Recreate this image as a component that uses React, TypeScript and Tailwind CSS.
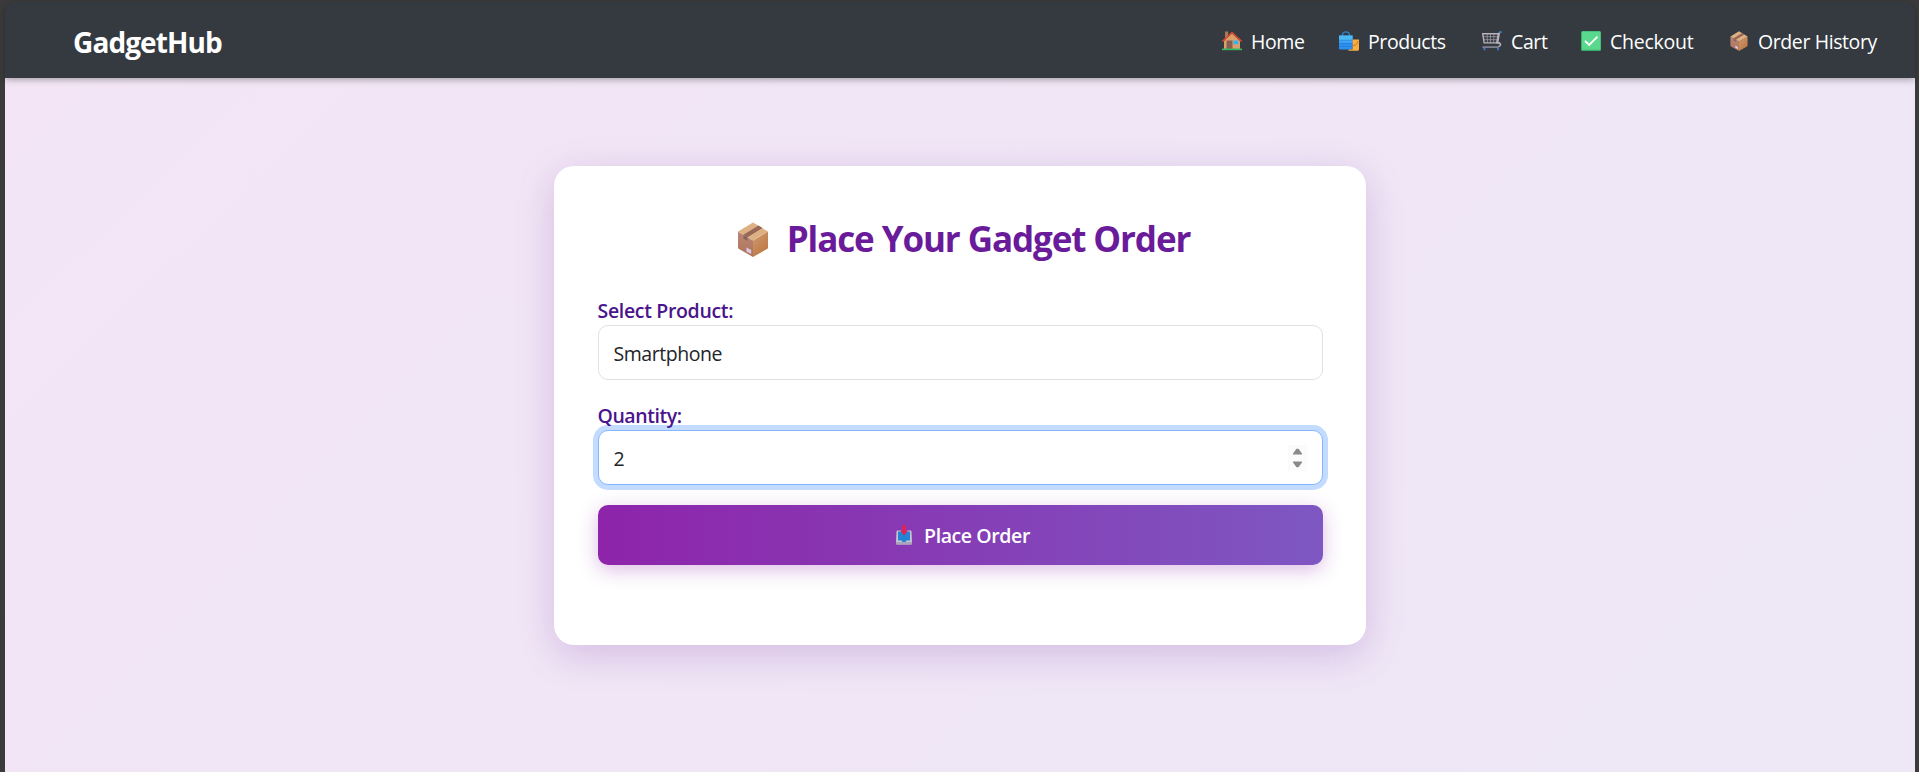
import React from "react";

function BoxIcon({ className }: { className: string }) {
  return (
    <svg viewBox="0 0 30 35" className={className}>
      <defs>
        <linearGradient id="boxLeft" x1="0" y1="0" x2="0" y2="1">
          <stop offset="0" stopColor="#b98672" />
          <stop offset="1" stopColor="#b0745c" />
        </linearGradient>
        <linearGradient id="boxRight" x1="0" y1="0" x2="0.6" y2="1">
          <stop offset="0" stopColor="#d09a72" />
          <stop offset="1" stopColor="#bd7842" />
        </linearGradient>
      </defs>
      <path d="M0 9.500 15 18.500V35L1 27Q0 26.500 0 25.500Z" fill="url(#boxLeft)" />
      <path d="M30 9.500 15 18.500V35L29 27Q30 26.500 30 25.500Z" fill="url(#boxRight)" />
      <path d="M0 9.500 15 .5 30 9.500 15 18.500Z" fill="#deb184" />
      <path d="M5.500 12.800 20.500 3.500 24.500 6 9.500 15.200Z" fill="#976855" />
      <path d="M5.500 12.800 9.500 15.200V19L5.500 16.500Z" fill="#856360" />
      <path d="M8.500 25.500 13.200 28V32L8.500 29.500Z" fill="#d9cbe6" />
    </svg>
  );
}

function HomeIcon() {
  return (
    <svg viewBox="0 0 20 20" className="h-5 w-5">
      <path d="M3 .5h3.200v8H3z" fill="#a57a55" />
      <path d="M2 10 10 2.500 18 10v8H2z" fill="#d8a16c" />
      <path d="M4.500 9.500h6V18h-6z" fill="#8a5f50" />
      <path d="M11.500 9.500h4.700v3.800h-4.700z" fill="#35b3f0" />
      <path d="M.8 10 10 1.500 19.200 10" fill="none" stroke="#e5452f" strokeWidth="1.600" strokeLinecap="round" strokeLinejoin="round" />
      <path d="M0 17.500h20v1.700H0z" fill="#38b561" />
    </svg>
  );
}

function BagsIcon() {
  return (
    <svg viewBox="0 0 20 20" className="h-5 w-5">
      <path d="M3.500 5V3.500Q4 .8 7 .8t3.500 2.700V5" fill="none" stroke="#2e86cd" strokeWidth="1.200" />
      <path d="M0 4.500h13.600V18.500H1.200Q0 18.500 0 17.300Z" fill="#2b8ff0" />
      <path d="M0 4.500h13.600v4.500H0z" fill="#4db9f3" />
      <path d="M0 9h13.600v3H0z" fill="#3fa5f2" />
      <path d="M0 9.200h13.600M0 12.400h13.600M0 15.500h13.600" stroke="#2573ce" strokeWidth=".5" />
      <path d="M13.600 8.500H20v9.700q0 1.500-1.500 1.500H9.500v-1.200h4.100z" fill="#f9ae3f" />
      <path d="M14.200 14.500c3 .2 4.300-1.800 4.300-4.300" fill="none" stroke="#d96b22" strokeWidth="1" />
    </svg>
  );
}

function CartIcon() {
  return (
    <svg viewBox="0 0 20 20" className="h-5 w-5" fill="none" stroke="#b9b2be">
      <path d="M.7 5.700h15.200M1.200 8.700h14.200M5 2.800l.5 9M8.500 2.800v9M12 2.800l-.3 9" strokeWidth=".8" stroke="#9b95a1" />
      <path d="M.7 2.800h15.600l-1.600 9.100H2.200z" strokeWidth="1.400" />
      <path d="M17.500 1.200 15.500 12c3.300-.7 4.300 2.800.8 3.600" strokeWidth="1.500" />
      <path d="M.5 16.100h16.600" strokeWidth="1.500" stroke="#8d8ba5" />
      <path d="M17 1.100h2.800" stroke="#4180d0" strokeWidth="1.700" />
      <path d="M2.500 16.800v2.400M16 16.800v2.400" stroke="#3d7ad0" strokeWidth="1.800" />
    </svg>
  );
}

function CheckIcon() {
  return (
    <svg viewBox="0 0 20 20" className="h-5 w-5">
      <rect width="20" height="20" rx="1.500" fill="#37b06c" />
      <rect x="1" y=".6" width="18.400" height="18.200" rx="1" fill="#5ad88e" />
      <path d="m4 9.800 4.200 4.200L16.500 5.700" fill="none" stroke="#fff" strokeWidth="1.800" />
    </svg>
  );
}

function InboxIcon() {
  return (
    <svg viewBox="0 0 16 20" className="h-5 w-4">
      <path d="M1.500 5.500h13q1 0 1 1l.5 12q0 1-1 1H1q-1 0-1-1L.5 6.500q0-1 1-1z" fill="#c9c6d3" />
      <path d="M2 6.500h12v9h-3.500L9.500 17h-3l-1-1.500H2z" fill="#2583d3" />
      <path d="M0 17h16v1.700q0 .8-1 .8H1q-1 0-1-.8z" fill="#aba3ba" />
      <path d="M6.300 0h3.700v5.500h2.200L8.200 10.500 4 5.500h2.300z" fill="#dc2457" />
    </svg>
  );
}

function NavLink({ icon, label, className }: { icon: React.ReactNode; label: string; className: string }) {
  return (
    <a className={`flex items-center gap-[9px] ${className}`}>
      {icon}
      <span className="pt-0.5">{label}</span>
    </a>
  );
}

export default function App() {
  return (
    <div className="h-[772px] w-[1919px] overflow-hidden bg-[#3b3b3b] pt-[2px] pr-1 pl-[5px] font-['Open_Sans',sans-serif]">
      <div className="flex h-full flex-col">
        <header className="relative z-10 flex h-[76px] shrink-0 items-center rounded-t-[10px] bg-[#343a40] pl-[68px] text-white shadow-[0_2px_6px_rgba(0,0,0,0.3)]">
          <div className="w-[1149px] pt-[3px] text-[28px] font-bold tracking-[-0.9px]">GadgetHub</div>
          <nav className="flex pt-px text-[19.5px] tracking-[-0.4px] whitespace-nowrap">
            <NavLink icon={<HomeIcon />} label="Home" className="w-[117px]" />
            <NavLink icon={<BagsIcon />} label="Products" className="w-[143px]" />
            <NavLink icon={<CartIcon />} label="Cart" className="w-[99px]" />
            <NavLink icon={<CheckIcon />} label="Checkout" className="w-[148px] tracking-[-0.25px]" />
            <NavLink icon={<BoxIcon className="h-5 w-5" />} label="Order History" className="" />
          </nav>
        </header>
        <main className="flex flex-1 items-start justify-center bg-[linear-gradient(135deg,#f3e5f5,#ede7f6)] pt-[88px]">
          <section className="flex h-[479px] w-[812px] flex-col rounded-[20px] bg-white px-[43.5px] pt-[45px] shadow-[0_10px_38px_rgba(106,27,154,0.2)]">
            <h1 className="flex h-[56px] items-center justify-center gap-[19px] pl-[8px] text-[35px] font-bold tracking-[-1.1px] whitespace-nowrap text-[#6a1b9a]">
              <BoxIcon className="h-[35px] w-[30px]" />
              <span>Place Your Gadget Order</span>
            </h1>
            <label className="mt-[28px] flex h-[30px] items-center pt-0.5 text-[19.5px] font-semibold tracking-[-0.33px] text-[#4a148c]"><span>Select Product:</span></label>
            <div className="flex h-[55px] items-center rounded-[10px] border border-[#dee2e6] px-[15px] pt-[3px] text-[19.5px] tracking-[-0.45px] text-[#212529]"><span>Smartphone</span></div>
            <label className="relative z-10 mt-[20px] flex h-[30px] items-center pt-0.5 text-[19.5px] font-semibold tracking-[-0.45px] text-[#4a148c]"><span>Quantity:</span></label>
            <div className="flex h-[55px] items-center justify-between rounded-[10px] border border-[#86b7fe] bg-white pr-[15px] pl-[15px] text-[19.5px] text-[#212529] shadow-[0_0_0_5px_#c2dbfe]">
              <span className="pt-[3px]">2</span>
              <span className="flex h-[26px] w-[19px] items-center justify-center bg-[#fbfbfb]">
                <svg viewBox="0 0 9 20" className="h-5 w-[9px]" fill="#8a8a8a"><path d="M0 6.500V5.500L3.500 .8h2L9 5.500v1zM0 13.500v1L3.500 19.200h2L9 14.500v-1z" /></svg>
              </span>
            </div>
            <button className="mt-5 flex h-[60px] shrink-0 items-center justify-center gap-[12px] rounded-[10px] bg-[linear-gradient(to_right,#8e24aa,#7e57c2)] pl-[6px] text-[19.5px] font-semibold tracking-[-0.4px] text-white shadow-[0_5px_19px_rgba(142,36,170,0.3)]">
              <InboxIcon /><span className="pt-0.5">Place Order</span>
            </button>
          </section>
        </main>
      </div>
    </div>
  );
}
